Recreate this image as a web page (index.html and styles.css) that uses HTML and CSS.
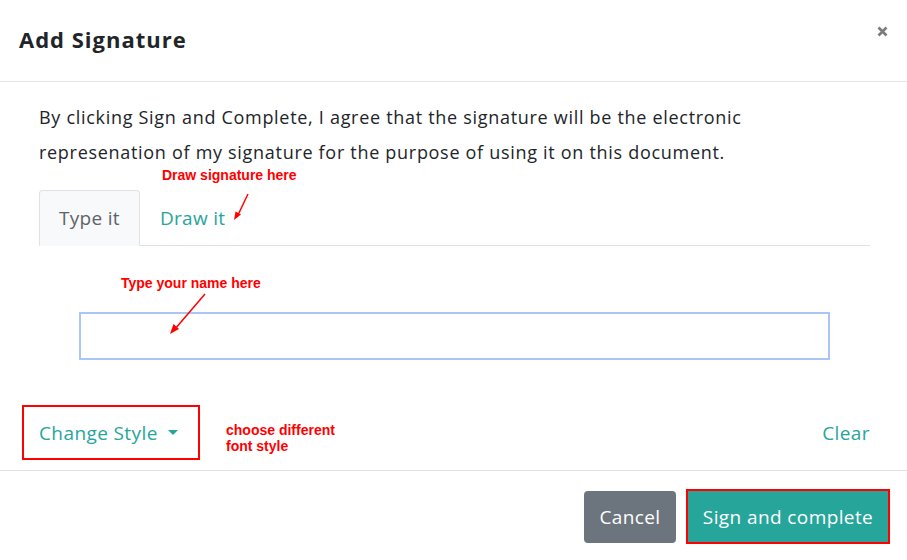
FILE: index.html
```html
<!DOCTYPE html>
<html lang="en">
  <head>
    <title>Add Signature</title>
    <meta charset="UTF-8" />
    <meta name="viewport" content="width=device-width" />
    <link rel="stylesheet" href="styles.css">
  </head>
  <body>
    <!-- Signature modal -->
    <div class="modal">
      <div class="modal-header">
        <h1 class="modal-title">Add Signature</h1>
        <button class="close" type="button" aria-label="Close">
          <svg width="11" height="11" viewBox="0 0 11 11">
            <path d="M1.5 1.5 L9.5 9.5 M9.5 1.5 L1.5 9.5" stroke="#7b7b7b" stroke-width="2.6" stroke-linecap="butt" fill="none" />
          </svg>
        </button>
      </div>

      <div class="modal-body">
        <p class="agree">
          By clicking Sign and Complete, I agree that the signature will be the electronic
          represenation of my signature for the purpose of using it on this document.
        </p>

        <!-- Tabs -->
        <div class="tabs">
          <a class="tab active" href="#">Type it</a>
          <a class="tab" href="#">Draw it</a>
        </div>

        <div class="type-pane">
          <input class="name-input" type="text" />
        </div>

        <div class="style-row">
          <button class="change-style" type="button">Change Style <span class="caret"></span></button>
          <a class="clear" href="#">Clear</a>
        </div>
      </div>

      <div class="modal-footer">
        <button class="btn btn-cancel" type="button">Cancel</button>
        <button class="btn btn-sign" type="button">Sign and complete</button>
      </div>

      <!-- Help notes drawn over the dialog -->
      <div class="note note-draw">Draw signature here</div>
      <div class="note note-type">Type your name here</div>
      <div class="note note-style">choose different<br />font style</div>

      <svg class="arrow arrow-draw" width="30" height="40" viewBox="0 0 30 40">
        <path d="M24 4 L13 27" stroke="#f00" stroke-width="1.5" fill="none" />
        <path d="M10 30 L11.5 21.5 L17 24.5 Z" fill="#f00" />
      </svg>
      <svg class="arrow arrow-type" width="50" height="60" viewBox="0 0 50 60">
        <path d="M43 6 L13 41" stroke="#f00" stroke-width="1.5" fill="none" />
        <path d="M8 46 L11.5 36 L17 41 Z" fill="#f00" />
      </svg>
    </div>
  </body>
</html>
```

FILE: styles.css
```css
* {
  box-sizing: border-box;
}

body {
  margin: 0;
  background-color: #fff;
  color: #212529;
  font-family: "Open Sans", "Noto Sans", sans-serif;
}

.modal {
  position: relative;
  width: 907px;
  height: 560px;
}

/* header */
.modal-header {
  display: flex;
  justify-content: space-between;
  align-items: flex-start;
  height: 82px;
  padding: 0 19px;
  border-bottom: 1px solid #e3e5e8;
}

.modal-title {
  margin: 26px 0 0;
  font-size: 22px;
  font-weight: 700;
  letter-spacing: 1px;
  line-height: 27px;
  color: #212529;
}

.close {
  margin: 25px 0 0 0;
  padding: 0;
  border: none;
  background: none;
  cursor: pointer;
}

/* body */
.modal-body {
  padding: 18px 37px 0 39px;
}

.agree {
  max-width: 730px;
  margin: 0;
  font-size: 18px;
  letter-spacing: 0.7px;
  line-height: 35px;
  color: #212529;
}

.tabs {
  display: flex;
  margin-top: 20px;
  border-bottom: 1px solid #dee2e6;
}

.tab {
  display: block;
  height: 56px;
  margin-bottom: -1px;
  padding: 0 19px;
  border: 1px solid transparent;
  border-radius: 4px 4px 0 0;
  font-size: 19px;
  letter-spacing: 0.3px;
  line-height: 54px;
  text-decoration: none;
  color: #26a69a;
}

.tab.active {
  background-color: #f8f9fa;
  border-color: #dee2e6 #dee2e6 #f8f9fa;
  color: #5f6368;
}

.type-pane {
  padding: 66px 40px 0;
}

.name-input {
  display: block;
  width: 100%;
  height: 48px;
  border: 2px solid #abc6f6;
  outline: none;
  font-size: 18px;
}

.style-row {
  display: flex;
  justify-content: space-between;
  align-items: center;
  margin: 45px 0 0 -17px;
  padding-bottom: 10px;
}

.change-style {
  display: flex;
  align-items: center;
  width: 178px;
  height: 55px;
  padding: 0 0 0 15px;
  border: 2px solid #f00;
  background: #fff;
  font-family: inherit;
  font-size: 19px;
  letter-spacing: 0.4px;
  color: #26a69a;
  cursor: pointer;
}

.caret {
  display: inline-block;
  margin-left: 10px;
  border-top: 5px solid #26a69a;
  border-left: 5px solid transparent;
  border-right: 5px solid transparent;
}

.clear {
  font-size: 19px;
  letter-spacing: 0.4px;
  text-decoration: none;
  color: #26a69a;
}

/* footer */
.modal-footer {
  display: flex;
  justify-content: flex-end;
  align-items: flex-start;
  gap: 10px;
  padding: 18px 17px 0;
  border-top: 1px solid #dee2e6;
}

.btn {
  height: 55px;
  padding: 0;
  border: none;
  border-radius: 4px;
  font-family: inherit;
  font-size: 19px;
  letter-spacing: 0.4px;
  color: #fff;
  cursor: pointer;
}

.btn-cancel {
  width: 92px;
  height: 52px;
  margin-top: 2px;
  background-color: #6c757d;
}

.btn-sign {
  width: 204px;
  border: 2px solid #f00;
  border-radius: 0;
  background-color: #26a69a;
}

/* red help notes */
.note {
  position: absolute;
  font-family: "Liberation Sans", Arial, sans-serif;
  font-size: 14px;
  font-weight: 700;
  line-height: 16px;
  color: #f00;
}

.note-draw {
  left: 162px;
  top: 167px;
}

.note-type {
  left: 121px;
  top: 275px;
}

.note-style {
  left: 226px;
  top: 422px;
}

.arrow {
  position: absolute;
}

.arrow-draw {
  left: 224px;
  top: 190px;
}

.arrow-type {
  left: 162px;
  top: 288px;
}
```
